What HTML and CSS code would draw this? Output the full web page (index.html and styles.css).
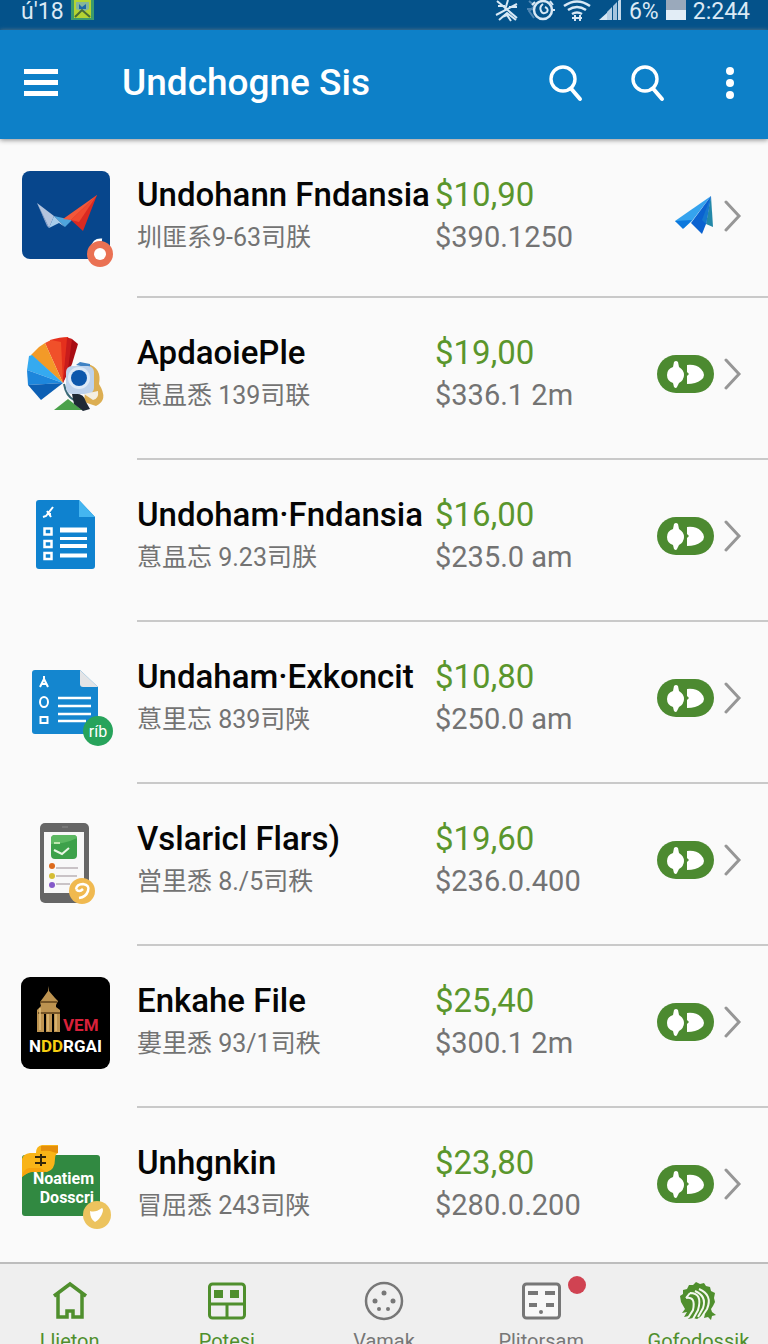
FILE: index.html
```html
<!DOCTYPE html>
<html lang="en">

<head>
  <meta charset="UTF-8" />
  <title>Undchogne Sis</title>
  <meta name="viewport" content="width=device-width, initial-scale=1.0" />
  <link rel="stylesheet" href="styles.css">
</head>

<body>
  <!-- shared shapes -->
  <svg class="defs" aria-hidden="true">
    <symbol id="search" viewBox="0 0 40 40">
      <circle cx="17" cy="16" r="12" fill="none" stroke="currentColor" stroke-width="3.4" />
      <path d="M25 25.500l9 10.500" fill="none" stroke="currentColor" stroke-width="4" stroke-linecap="round" />
    </symbol>
    <symbol id="chevron" viewBox="0 0 18 34">
      <path d="M2 3l13 14L2 31" fill="none" stroke="#969696" stroke-width="3" stroke-linecap="round" />
    </symbol>
    <symbol id="knob" viewBox="0 0 57 38">
      <path d="M16 12l1-5q2-2 4 0l1 5q5 3 5 8t-5 8l-2 4q-1 2-3 0l-1-4q-6-2-6-8t6-8z" fill="#fff" />
      <path d="M30 10q9-1 14 4q3 3 3 6t-3 5q-5 4-14 4v-8l2-2l-2-2z" fill="#fff" />
    </symbol>
  </svg>

  <div class="app">
    <div class="status">
      <span>ú'18</span>
      <svg width="23" height="22" viewBox="0 0 23 22">
        <path d="M0 0h23v20H0z" fill="#3c9a6c" />
        <path d="M3 0h17v18H3z" fill="#b4d432" />
        <path d="M5 2h13v7l-6 3-7-3z" fill="#86b59a" />
        <path d="M8 4l3 3 4-3v5h-7z" fill="#1f66a8" />
        <path d="M4 17l7-7 8 7" fill="none" stroke="#496c35" stroke-width="2" />
      </svg>
      <div class="status-right">
        <svg width="24" height="22" viewBox="0 0 24 22" fill="none" stroke="#d8e8f5" stroke-width="2">
          <path d="M2 1l20 17M1 15l21-11M3 6h7M13 0l-3 10M4 20l8-7 9 7M14 7h8M7 17l5-2 4 6" />
        </svg>
        <svg width="30" height="22" viewBox="0 0 30 22" fill="none">
          <path d="M3 1l6 5-6 5 5 7M1 9h7" stroke="#4f86b3" stroke-width="2" />
          <circle cx="17" cy="10" r="9" stroke="#d8e8f5" stroke-width="2.500" />
          <path d="M9 2l-3 3M24 1l3 4M26 10h3M17 4q-4 3-2 7t6 1q2-3-2-5" stroke="#d8e8f5" stroke-width="2" />
        </svg>
        <svg width="28" height="22" viewBox="0 0 28 22" fill="none" stroke="#d8e8f5" stroke-width="2.500">
          <path d="M1 6q13-9 26 0M5 10q9-6 18 0M9 14q5-3 10 0" />
          <path d="M9 18h10M12 15v6M17 15v6" stroke-width="2" />
        </svg>
        <svg width="24" height="22" viewBox="0 0 24 22">
          <path d="M1 20L11 11v9z" fill="#d8e8f5" />
          <path d="M9 12l5-5v13H9z" fill="#b8d0e5" />
          <path d="M15 6l4-4v18h-4z" fill="#a5c4de" />
          <path d="M20 1l3-3v22h-3z" fill="#c4d9ea" />
        </svg>
        <span>6%</span>
        <svg width="20" height="22" viewBox="0 0 20 22">
          <path d="M0 0h20v11H0z" fill="#9aa9bb" />
          <path d="M0 10h20v10H0z" fill="#e2edf6" />
        </svg>
        <span>2:244</span>
      </div>
    </div>

    <header class="toolbar">
      <button class="menu" aria-label="Menu">
        <svg width="34" height="30" viewBox="0 0 34 30" fill="#fff">
          <path d="M0 1h34v5H0zM0 12h34v5H0zM0 23h34v5H0z" />
        </svg>
      </button>
      <h1>Undchogne Sis</h1>
      <button class="tool" aria-label="Search"><svg width="40" height="40"><use href="#search" /></svg></button>
      <button class="tool" aria-label="Find"><svg width="40" height="40"><use href="#search" /></svg></button>
      <button class="tool" aria-label="More">
        <svg width="10" height="34" viewBox="0 0 10 34" fill="#fff">
          <circle cx="5" cy="5" r="4" />
          <circle cx="5" cy="17" r="4" />
          <circle cx="5" cy="29" r="4" />
        </svg>
      </button>
    </header>

    <ul class="list">
      <li class="row">
        <svg class="thumb" viewBox="0 0 112 112">
          <rect x="12" y="11" width="88" height="88" rx="8" fill="#07468c" />
          <path d="M27 43l17 13-5 12z" fill="#b3c4de" />
          <path d="M27 43l10 20 2 5-2-2z" fill="#8aa3cc" />
          <path d="M44 56l18 4-7 7z" fill="#4ea4dc" />
          <path d="M39 68l5-12 11 11-6-4z" fill="#a9cdea" />
          <path d="M53 59l34-24-18 26z" fill="#f2583a" />
          <path d="M87 35L73 71l-12-11z" fill="#d92a22" />
          <path d="M87 35L61 60l8 2z" fill="#ef4a30" />
          <path d="M82 88q2-9 10-8" fill="none" stroke="#fff" stroke-width="3" />
          <circle cx="90" cy="94" r="13" fill="#ea7153" />
          <circle cx="90" cy="94" r="6" fill="#fff" />
        </svg>
        <div class="info">
          <h2>Undohann Fndansia</h2>
          <p class="cjk">圳匪系9-63司朕</p>
        </div>
        <div class="price">
          <strong>$10,90</strong>
          <p>$390.1250</p>
        </div>
        <div class="actions">
          <svg width="40" height="40" viewBox="0 0 40 40">
            <path d="M1 25L37 0 18 25l-8 7z" fill="#35a3ee" />
            <path d="M37 0l2 31-7-3z" fill="#2388a8" />
            <path d="M37 0L17 27l11 11 4-10z" fill="#0b62d0" />
            <path d="M37 0l-5 28-4-4z" fill="#1477cf" />
            <path d="M1 25l17-1-9 9z" fill="#0c78dd" />
          </svg>
          <button class="open" aria-label="Open"><svg width="18" height="34"><use href="#chevron" /></svg></button>
        </div>
      </li>

      <li class="row">
        <svg class="thumb" viewBox="0 0 112 112">
          <path d="M53 65L40 22q10-3 18-3l3 5z" fill="#e5301d" />
          <path d="M53 65l5-45 4 1 6 5-6 20z" fill="#a80d14" />
          <path d="M53 65L57 20l5 1-4 30z" fill="#c81c1c" />
          <path d="M53 65L35 25l6-3 10 2z" fill="#f0502a" />
          <path d="M53 65L21 37l8-8 6-4z" fill="#f39a28" />
          <path d="M53 65L17 52l2-14 3-1z" fill="#35aaf0" />
          <path d="M53 65l-35 2-1-15z" fill="#1d86dc" />
          <path d="M53 65L31 82 18 67z" fill="#0c5fb4" />
          <path d="M44 92l14-11 14 11z" fill="#4aa14a" />
          <path d="M54 66q2 12 10 16" fill="none" stroke="#3b6a78" stroke-width="2" />
          <path d="M78 46q14 4 11 20 10 16-3 22l-12-4z" fill="#dcae52" />
          <path d="M62 76q12-2 14 8l4 7-7 2-9-7z" fill="#1e2935" />
          <path d="M66 47l4-3 10 2v4z" fill="#3f82c4" />
          <rect x="56" y="48" width="28" height="28" rx="6" fill="#bdd2ec" />
          <path d="M74 76l14-3q1 8-5 9z" fill="#f4efe2" />
          <circle cx="69" cy="60" r="11" fill="#dce9f7" />
          <circle cx="69" cy="60" r="8" fill="#0b57ac" />
        </svg>
        <div class="info">
          <h2>ApdaoiePle</h2>
          <p class="cjk">蒠昷悉 139司联</p>
        </div>
        <div class="price">
          <strong>$19,00</strong>
          <p>$336.1 2m</p>
        </div>
        <div class="actions">
          <label class="switch"><input type="checkbox" checked aria-label="ApdaoiePle" /><svg><use href="#knob" /></svg></label>
          <button class="open" aria-label="Open"><svg width="18" height="34"><use href="#chevron" /></svg></button>
        </div>
      </li>

      <li class="row">
        <svg class="thumb" viewBox="0 0 112 112">
          <path d="M29 20h40l16 17v49q0 3-3 3H29q-3 0-3-3V23q0-3 3-3z" fill="#0f82cf" />
          <path d="M69 20l16 17H69z" fill="#44b5f0" />
          <g fill="none" stroke="#fff" stroke-width="2">
            <path d="M43 27l-7 9-3 1M37 31l4 6M37 34h4" />
            <path d="M34.500 48.500h7v6h-7zM34.500 61h7v6h-7zM34.500 73h7v6h-7z" stroke-width="2.500" />
            <path d="M50 50h27" stroke-width="5" />
            <path d="M50 58.500h27" stroke-width="3" />
            <path d="M50 66h27M50 75.500h27" stroke-width="4" />
          </g>
        </svg>
        <div class="info">
          <h2>Undoham·Fndansia</h2>
          <p class="cjk">蒠昷忘 9.23司朕</p>
        </div>
        <div class="price">
          <strong>$16,00</strong>
          <p>$235.0 am</p>
        </div>
        <div class="actions">
          <label class="switch"><input type="checkbox" checked aria-label="Undoham·Fndansia" /><svg><use href="#knob" /></svg></label>
          <button class="open" aria-label="Open"><svg width="18" height="34"><use href="#chevron" /></svg></button>
        </div>
      </li>

      <li class="row">
        <svg class="thumb" viewBox="0 0 112 112">
          <path d="M25 28h45l18 17v44q0 3-3 3H25q-3 0-3-3V31q0-3 3-3z" fill="#1486cf" />
          <path d="M70 28l18 17H73q-3 0-3-3z" fill="#e3e4e6" />
          <g fill="none" stroke="#fff" stroke-width="2">
            <path d="M34 34v3l-4 8M34 37l4 8M31 42h6" />
            <ellipse cx="34" cy="60" rx="4" ry="5" />
            <path d="M30.500 75h7v6h-7z" />
            <path d="M48 56h33M48 64h33M48 72h33M48 79h28" stroke-width="2.500" />
          </g>
          <circle cx="88" cy="89" r="15" fill="#27a35b" />
          <text class="tag" x="88" y="95">ríb</text>
        </svg>
        <div class="info">
          <h2>Undaham·Exkoncit</h2>
          <p class="cjk">蒠里忘 839司陕</p>
        </div>
        <div class="price">
          <strong>$10,80</strong>
          <p>$250.0 am</p>
        </div>
        <div class="actions">
          <label class="switch"><input type="checkbox" checked aria-label="Undaham·Exkoncit" /><svg><use href="#knob" /></svg></label>
          <button class="open" aria-label="Open"><svg width="18" height="34"><use href="#chevron" /></svg></button>
        </div>
      </li>

      <li class="row">
        <svg class="thumb" viewBox="0 0 112 112">
          <rect x="30" y="19" width="49" height="80" rx="5" fill="#666" />
          <path d="M34 28h40v61H34z" fill="#f8f8f8" />
          <path d="M52 23h6" stroke="#888" />
          <rect x="41" y="31" width="26" height="24" rx="4" fill="#3da14a" />
          <path d="M41 40q14 0 26-6v-1q-1-2-3-2H45q-4 0-4 4z" fill="#5cb862" />
          <path d="M44 39h6" stroke="#bfe6b0" stroke-width="2" />
          <path d="M44 46l8 4 7-6" fill="none" stroke="#e9f7e4" stroke-width="2" />
          <circle cx="42" cy="62" r="3" fill="#dc6a1c" />
          <circle cx="42" cy="72" r="3" fill="#d5bd35" />
          <circle cx="42" cy="81" r="3" fill="#8459c9" />
          <path d="M46 64h22M46 72h21M46 80h14" stroke="#c9c3c6" stroke-width="2" />
          <circle cx="72" cy="87" r="13" fill="#f0b950" />
          <path d="M66 85q1-5 7-5 7 1 5 7-2 6-9 7M66 85q3 4 7 0" fill="none" stroke="#fff" stroke-width="2.500" />
        </svg>
        <div class="info">
          <h2>Vslaricl Flars)</h2>
          <p class="cjk">営里悉 8./5司秩</p>
        </div>
        <div class="price">
          <strong>$19,60</strong>
          <p>$236.0.400</p>
        </div>
        <div class="actions">
          <label class="switch"><input type="checkbox" checked aria-label="Vslaricl Flars" /><svg><use href="#knob" /></svg></label>
          <button class="open" aria-label="Open"><svg width="18" height="34"><use href="#chevron" /></svg></button>
        </div>
      </li>

      <li class="row">
        <svg class="thumb" viewBox="0 0 112 112">
          <rect x="11" y="11" width="89" height="92" rx="9" fill="#000" />
          <g fill="#bd9350">
            <path d="M38 20l1 5 6 7 3 3-2 4v2l4 3v22h-6V48h-2v18h-6V48h-2v18h-7V44l4-4-1-4 3-4 5-7z" />
          </g>
          <path d="M30 36h17M28 47h22" stroke="#5f4219" stroke-width="1.500" />
          <path d="M30 42v22M38 48v17M46 48v17" stroke="#e0bd7a" stroke-width="1.500" />
          <text class="poster red" x="53" y="65">VEM</text>
          <text class="poster" x="19" y="86">N<tspan fill="#f7cf12">DD</tspan>RGAI</text>
        </svg>
        <div class="info">
          <h2>Enkahe File</h2>
          <p class="cjk">婁里悉 93/1司秩</p>
        </div>
        <div class="price">
          <strong>$25,40</strong>
          <p>$300.1 2m</p>
        </div>
        <div class="actions">
          <label class="switch"><input type="checkbox" checked aria-label="Enkahe File" /><svg><use href="#knob" /></svg></label>
          <button class="open" aria-label="Open"><svg width="18" height="34"><use href="#chevron" /></svg></button>
        </div>
      </li>

      <li class="row">
        <svg class="thumb" viewBox="0 0 112 112">
          <rect x="12" y="27" width="78" height="61" rx="3" fill="#318941" />
          <path d="M12 49V31q1-5 8-6h6q0-7 6-8h16v8q-3 1-3 6 0 11-8 13H22q-4 0-10 5z" fill="#f9b417" />
          <path d="M31 18h17v7q-3 0-5-1-4-2-12-1z" fill="#e58f0b" />
          <path d="M12 49q1-8 7-9h11l7 4H22q-4 0-10 5z" fill="#f7a20c" />
          <path d="M25 29h11M25 35h11M31 26v12" fill="none" stroke="#33260a" stroke-width="2" />
          <text class="sign" x="84" y="56">Noatiem</text>
          <text class="sign" x="84" y="75">Dosscri</text>
          <circle cx="87" cy="87" r="14" fill="#ecc35e" />
          <path d="M80 83q5 2 12-3 2 1 0 6-2 5-7 8-5-3-5-11z" fill="#fff" />
        </svg>
        <div class="info">
          <h2>Unhgnkin</h2>
          <p class="cjk">冒屈悉 243司陕</p>
        </div>
        <div class="price">
          <strong>$23,80</strong>
          <p>$280.0.200</p>
        </div>
        <div class="actions">
          <label class="switch"><input type="checkbox" checked aria-label="Unhgnkin" /><svg><use href="#knob" /></svg></label>
          <button class="open" aria-label="Open"><svg width="18" height="34"><use href="#chevron" /></svg></button>
        </div>
      </li>
    </ul>

    <nav class="tabs">
      <div class="tabs-inner">
        <a class="tab active" href="#home">
          <svg viewBox="0 0 40 40" fill="none" stroke="currentColor" stroke-width="3.500">
            <path d="M4 15L20 3l16 12M8 13v23h9v-6h6v6h9V13" />
          </svg>
          Llieton
        </a>
        <a class="tab active" href="#potesi">
          <svg viewBox="0 0 40 40" fill="none" stroke="currentColor" stroke-width="3">
            <rect x="2.500" y="3" width="35" height="34" rx="3" />
            <path d="M3 23h34M20 23v14" />
            <path d="M7 9h9v8H7zM23 9h9v8h-9z" fill="currentColor" stroke="none" />
          </svg>
          Potesi
        </a>
        <a class="tab" href="#vamak">
          <svg viewBox="0 0 40 40" fill="currentColor">
            <circle cx="20" cy="20" r="18" fill="none" stroke="currentColor" stroke-width="2.500" />
            <circle cx="11" cy="20" r="2.500" />
            <circle cx="29" cy="20" r="2.500" />
            <circle cx="20" cy="12" r="2.500" />
            <circle cx="15" cy="28" r="2" />
            <circle cx="24" cy="28" r="2" />
          </svg>
          Vamak
        </a>
        <a class="tab" href="#plitorsam">
          <svg viewBox="0 0 40 40" fill="none" stroke="currentColor" stroke-width="3">
            <rect x="2.500" y="3" width="36" height="34" rx="3" fill="#f8f8f8" />
            <path d="M7 12h10M24 12h10M8 24h8M25 24h8" stroke-width="4" />
            <circle cx="20" cy="31" r="2" fill="currentColor" stroke="none" />
          </svg>
          <span class="badge"></span>
          Plitorsam
        </a>
        <a class="tab active" href="#gofodossik">
          <svg viewBox="0 0 40 40">
            <path d="M3 21l-1-6 3-2 0-4 4-1 2-4 4 0 3-3 4 2 4-1 2 3 4 1 1 4 4 2-1 5 1 4-2 4-2 3 1 3 4 3-4 1-1 4-3-3-4 1 1-4-8 5-4-1-5 1 1-3-5 1 3-5-5 1 3-4z" fill="currentColor" />
            <g fill="none" stroke="#f3f8ee" stroke-width="2">
              <path d="M8 17q10-2 7 12l-5 8M12 12q13 0 8 17l-5 9M17 10q12 5 8 17l-5 9M21 8q14 6 8 20l-6 9M8 17l4-5" />
            </g>
          </svg>
          Gofodossik
        </a>
      </div>
    </nav>
  </div>
</body>

</html>
```
FILE: styles.css
```css
:root {
  --color-bar: #0d80c8;
  --color-status: #04528a;
  --color-green: #5a962c;
  --color-switch: #4c8a30;
  --color-muted: #737373;
  --color-line: #c9c9c9;
}

* {
  box-sizing: border-box;
}

body {
  margin: 0;
  font-family: Roboto, "Noto Sans CJK SC", sans-serif;
  background-color: #fafafa;
}

h1,
h2,
p {
  margin: 0;
  font-weight: 500;
}

button {
  border: 0;
  padding: 0;
  background: none;
  color: inherit;
  cursor: pointer;
}

svg {
  display: block;
  flex: none;
}

.defs {
  display: none;
}

.app {
  display: flex;
  flex-direction: column;
  height: 100vh;
  overflow: hidden;
}

/* status bar */
.status {
  display: flex;
  gap: 7px;
  flex: none;
  height: 30px;
  padding: 0 18px 0 21px;
  font-size: 23px;
  line-height: 24px;
  color: #dbe9f5;
  background-color: var(--color-status);
}

.status-right {
  display: flex;
  gap: 7px;
  margin-left: auto;
}

/* toolbar */
.toolbar {
  display: flex;
  align-items: center;
  gap: 34px;
  flex: none;
  height: 109px;
  padding: 0 14px 4px 24px;
  color: #fff;
  background-color: var(--color-bar);
  box-shadow: 0 1px 5px #888;
  z-index: 1;
}

.toolbar h1 {
  flex: 1;
  margin-left: 30px;
  font-size: 37px;
  line-height: 48px;
  white-space: nowrap;
}

.tool {
  display: flex;
  justify-content: center;
  align-items: center;
  width: 48px;
  height: 48px;
}

/* list */
.list {
  flex: 1;
  min-height: 0;
  overflow: hidden;
  margin: 0;
  padding: 0;
  list-style: none;
}

.row {
  display: grid;
  grid-template-columns: 137px 298px 1fr auto;
  align-items: center;
  position: relative;
  padding: 33px 26px 43px 0;
  white-space: nowrap;
}

.row:first-child {
  padding: 34px 26px 39px 0;
}

.row::after {
  content: "";
  position: absolute;
  left: 137px;
  right: 0;
  bottom: 0;
  height: 2px;
  background-color: var(--color-line);
}

.row:last-child::after {
  display: none;
}

.thumb {
  width: 112px;
  height: 112px;
  margin: -13px 0 -13px 10px;
}

.info h2,
.price strong {
  display: block;
  font-size: 33px;
  font-weight: 500;
  line-height: 43px;
}

.info h2 {
  color: #050505;
}

.price strong {
  font-weight: 400;
  color: var(--color-green);
}

.price p,
.info p {
  font-size: 29px;
  font-weight: 400;
  line-height: 43px;
  color: var(--color-muted);
}

.info .cjk {
  font-size: 25px;
}

.actions {
  display: flex;
  align-items: center;
  gap: 10px;
}

.open {
  width: 18px;
  height: 34px;
}

.switch {
  display: grid;
  width: 57px;
  height: 38px;
}

.switch input,
.switch svg {
  grid-area: 1 / 1;
  width: 57px;
  height: 38px;
  margin: 0;
}

.switch input {
  appearance: none;
  border-radius: 19px;
  background-color: #aaa;
}

.switch input:checked {
  background-color: var(--color-switch);
}

.switch svg {
  position: relative;
  pointer-events: none;
}

/* lettering inside the thumbnails */
.tag {
  font-size: 16px;
  fill: #fff;
  text-anchor: middle;
}

.poster {
  font-size: 17px;
  font-weight: 700;
  fill: #fff;
}

.poster.red {
  fill: #d9203a;
}

.sign {
  font-size: 16px;
  font-weight: 700;
  fill: #fff;
  text-anchor: end;
}

/* bottom tabs */
.tabs {
  flex: none;
  height: 82px;
  overflow: hidden;
  border-top: 2px solid #bdbdbd;
  background-color: #efefef;
}

.tabs-inner {
  display: flex;
  margin: 0 -9px;
}

.tab {
  display: flex;
  flex-direction: column;
  align-items: center;
  gap: 8px;
  flex: 1;
  position: relative;
  padding-top: 17px;
  font-size: 20px;
  line-height: 24px;
  text-decoration: none;
  color: #777;
}

.tab.active {
  color: #4f8f2d;
}

.tab svg {
  width: 40px;
  height: 40px;
}

.badge {
  position: absolute;
  top: 12px;
  left: 50%;
  width: 18px;
  height: 18px;
  margin-left: 27px;
  border-radius: 50%;
  background-color: #d04352;
}
```
